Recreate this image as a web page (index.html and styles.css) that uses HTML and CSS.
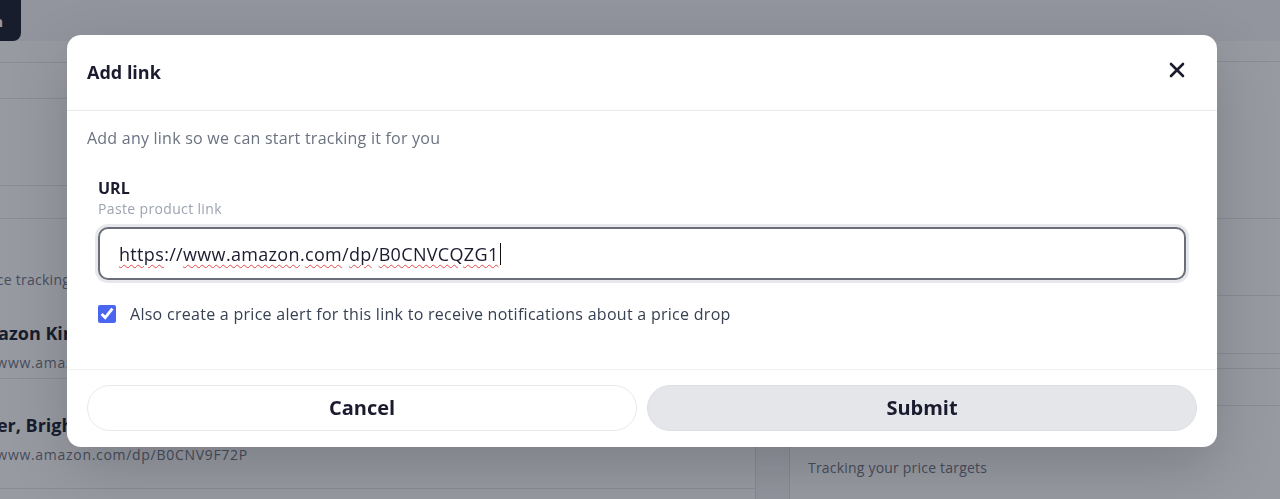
FILE: index.html
```html
<!DOCTYPE html>
<html lang="en">
<head>
    <meta charset="UTF-8">
    <meta name="viewport" content="width=device-width, initial-scale=1.0">
    <title>Add link</title>
    <link rel="stylesheet" href="styles.css">
</head>
<body>

<div class="page">
    <div class="topbar">
        <button class="top-btn">Sign in</button>
    </div>

    <div class="columns">
        <div class="left-card">
            <div class="row row-a"></div>
            <div class="row row-b"></div>
            <div class="row row-c"></div>
            <div class="row row-d"></div>
            <div class="intro">Start price tracking</div>
            <div class="item item-first">
                <div class="item-title">Amazon Kindle Paperwhite</div>
                <div class="item-url">https://www.amazon.com/dp/B08KTZ8249</div>
            </div>
            <div class="item item-last">
                <div class="item-title">Echo Speaker, Bright Blue</div>
                <div class="item-url">https://www.amazon.com/dp/B0CNV9F72P</div>
            </div>
        </div>

        <div class="right-card">
            <div class="row r-a"></div>
            <div class="row r-b"></div>
            <div class="row r-c"></div>
            <div class="row r-d"></div>
            <div class="row r-e"></div>
            <div class="row r-f"></div>
            <p class="right-note">Tracking your price targets</p>
        </div>
    </div>
</div>

<div class="overlay">
    <div class="modal">
        <div class="modal-header">
            <h2>Add link</h2>
            <button class="close-btn" aria-label="Close">
                <svg width="16" height="16" viewBox="0 0 16 16" fill="none" stroke="currentColor" stroke-width="2.6" stroke-linecap="round">
                    <path d="M2 2L14 14M14 2L2 14"/>
                </svg>
            </button>
        </div>

        <div class="modal-body">
            <p class="modal-desc">Add any link so we can start tracking it for you</p>

            <div class="field">
                <label class="field-label">URL</label>
                <span class="field-hint">Paste product link</span>
                <div class="url-input">
                    <span class="typo">https</span>://<span class="typo">www.amazon</span>.<span class="typo">com</span>/<span class="typo">dp</span>/<span class="typo">B0CNVCQZG1</span><span class="caret"></span>
                </div>

                <label class="check-row">
                    <input type="checkbox" checked>
                    <span>Also create a price alert for this link to receive notifications about a price drop</span>
                </label>
            </div>
        </div>

        <div class="modal-footer">
            <button class="btn btn-cancel">Cancel</button>
            <button class="btn btn-submit">Submit</button>
        </div>
    </div>
</div>

</body>
</html>
```

FILE: styles.css
```css
body {
    margin: 0;
    background-color: #f5f6f8;
    font-family: "Open Sans", "Noto Sans", sans-serif;
    overflow: hidden;
    height: 499px;
}

/* page behind the dialog */
.page {
    width: 1280px;
}

.topbar {
    height: 41px;
}

.top-btn {
    height: 49px;
    width: 120px;
    margin-top: -8px;
    margin-left: -99px;
    background-color: #111827;
    color: white;
    border: none;
    border-radius: 8px;
    font-family: inherit;
    font-weight: 700;
    font-size: 15px;
    text-align: right;
    padding: 8px 18px 0 0;
}

.columns {
    display: flex;
    gap: 33px;
    min-height: 458px;
}

.left-card {
    width: 755px;
    border-right: 1px solid #dfe1e6;
    background-color: white;
}

.right-card {
    flex: 1;
    border-left: 1px solid #dfe1e6;
    background-color: white;
}

.row {
    border-bottom: 1px solid #e3e5ea;
}

.row-a { height: 21px; }
.row-b { height: 35px; }
.row-c { height: 86px; }
.row-d { height: 32px; }

.r-a { height: 20px; }
.r-b { height: 156px; }
.r-c { height: 76px; }
.r-d { height: 57px; }
.r-e { height: 14px; }
.r-f { height: 36px; }

.intro {
    margin-left: -58px;
    padding-top: 51px;
    font-size: 14px;
    letter-spacing: 0.25px;
    color: #6b7280;
}

.item {
    border-bottom: 1px solid #e3e5ea;
}

.item-first {
    padding: 32px 0 6px;
}

.item-last {
    padding: 34px 0 24px;
}

.item-title {
    margin-left: -32px;
    font-size: 18px;
    font-weight: 700;
    color: #111827;
}

.item-last .item-title {
    margin-left: -104px;
}

.item-url {
    margin-left: -57px;
    margin-top: 8px;
    font-size: 14px;
    letter-spacing: 0.7px;
    color: #6b7280;
}

.right-note {
    margin: 52px 0 0 18px;
    font-size: 14px;
    letter-spacing: 0.2px;
    color: #6b7280;
}

/* dialog */
.overlay {
    position: fixed;
    inset: 0;
    background-color: rgba(30, 34, 52, 0.46);
    display: flex;
    justify-content: center;
    align-items: flex-start;
    padding-top: 35px;
}

.modal {
    width: 1150px;
    margin-left: 4px;
    background-color: white;
    border-radius: 14px;
    box-shadow: 0 20px 60px rgba(0, 0, 0, 0.18);
}

.modal-header {
    height: 75px;
    display: flex;
    justify-content: space-between;
    align-items: center;
    padding: 0 28px 0 20px;
    border-bottom: 1px solid #e9ebef;
}

.modal-header h2 {
    margin: 0 0 2px;
    font-size: 18px;
    font-weight: 700;
    color: #1a1b2e;
}

.close-btn {
    width: 24px;
    height: 24px;
    padding: 4px;
    margin-bottom: 6px;
    border: none;
    background: none;
    color: #1a1b2e;
    cursor: pointer;
}

.close-btn svg {
    display: block;
}

.modal-body {
    padding: 15px 20px 44px;
}

.modal-desc {
    margin: 0;
    font-size: 16px;
    line-height: 24px;
    letter-spacing: 0.23px;
    color: #6b7280;
}

.field {
    padding: 28px 11px 0;
}

.field-label {
    display: block;
    font-size: 16px;
    line-height: 20px;
    font-weight: 700;
    color: #1a1b2e;
}

.field-hint {
    display: block;
    margin-top: 1px;
    font-size: 14px;
    line-height: 20px;
    letter-spacing: 0.35px;
    color: #9ca3af;
}

.url-input {
    margin-top: 8px;
    height: 49px;
    padding: 0 19px;
    display: flex;
    align-items: center;
    border: 2px solid #6b6e78;
    border-radius: 10px;
    box-shadow: 0 0 0 3px #e7e8ec;
    font-size: 18px;
    letter-spacing: 0.33px;
    color: #1a1b2e;
    white-space: pre;
}

.typo {
    text-decoration: underline wavy #e5484d;
    text-decoration-thickness: 1px;
    text-underline-offset: 3px;
}

.caret {
    display: inline-block;
    width: 1px;
    height: 22px;
    margin-left: 1px;
    background-color: #111;
}

.check-row {
    display: flex;
    align-items: center;
    gap: 14px;
    margin-top: 23px;
    font-size: 16px;
    line-height: 22px;
    letter-spacing: 0.28px;
    color: #374151;
}

.check-row input {
    width: 18px;
    height: 18px;
    margin: 0;
    accent-color: #4a66f0;
}

.modal-footer {
    display: flex;
    gap: 10px;
    padding: 15px 20px 16px;
    border-top: 1px solid #f1f2f4;
}

.btn {
    flex: 1;
    height: 46px;
    padding-bottom: 2px;
    border-radius: 23px;
    font-family: inherit;
    font-size: 20px;
    font-weight: 700;
    color: #1a1b2e;
    cursor: pointer;
}

.btn-cancel {
    background-color: white;
    border: 1px solid #e8e9ec;
}

.btn-submit {
    background-color: #e5e6ea;
    border: 1px solid #dddfe3;
}
```
